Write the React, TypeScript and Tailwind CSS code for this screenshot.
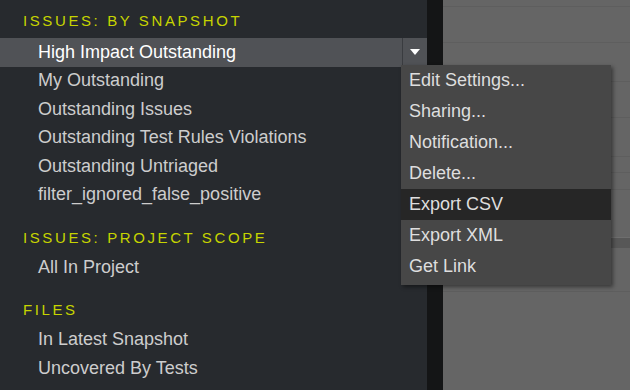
const snapshotItems = [
  "High Impact Outstanding",
  "My Outstanding",
  "Outstanding Issues",
  "Outstanding Test Rules Violations",
  "Outstanding Untriaged",
  "filter_ignored_false_positive",
];

const menuItems = [
  "Edit Settings...",
  "Sharing...",
  "Notification...",
  "Delete...",
  "Export CSV",
  "Export XML",
  "Get Link",
];

const SectionHeader = ({ label, className = "" }: { label: string; className?: string }) => (
  <div
    className={`h-[30px] flex items-center pl-[23px] text-[15px] tracking-[2.6px] text-[#c6d400] ${className}`}
  >
    {label}
  </div>
);

const Row = ({ label, selected = false }: { label: string; selected?: boolean }) => (
  <div
    className={`relative h-[28.5px] flex items-center pl-[38px] text-[18px] ${
      selected ? "bg-[#505256] text-white" : "text-[#cdcdcd]"
    }`}
  >
    {label}
    {selected && (
      <div className="absolute right-0 top-0 h-full w-[25px] border-l border-[#3a3c40] flex items-center justify-center">
        <svg width="10" height="6" viewBox="0 0 10 6">
          <path d="M0 0 L10 0 L5 6 Z" fill="#ffffff" />
        </svg>
      </div>
    )}
  </div>
);

export default function App() {
  return (
    <div
      className="relative w-[630px] h-[390px] flex overflow-hidden"
      style={{ fontFamily: '"Liberation Sans", Arial, sans-serif' }}
    >
      <div className="w-[427px] h-full bg-[#272a2e] pt-[6px]">
        <SectionHeader label="ISSUES: BY SNAPSHOT" className="mb-[2px]" />
        {snapshotItems.map((item, i) => (
          <Row key={item} label={item} selected={i === 0} />
        ))}

        <SectionHeader label="ISSUES: PROJECT SCOPE" className="mt-[14px]" />
        <Row label="All In Project" />

        <SectionHeader label="FILES" className="mt-[14px]" />
        <Row label="In Latest Snapshot" />
        <Row label="Uncovered By Tests" />
      </div>

      <div className="w-[16px] h-full bg-[#141516]" />

      <div className="flex-1 h-full bg-[#656565] flex flex-col">
        <div className="h-[7px] border-b border-[#5e5e5e]" />
        <div className="h-[36px] border-b border-[#5e5e5e]" />
        <div className="h-[39px] border-b border-[#5e5e5e]" />
        <div className="h-[36px] border-b border-[#5e5e5e]" />
        <div className="h-[39px] border-b border-[#5e5e5e]" />
        <div className="h-[16px] border-b border-[#5e5e5e]" />
        <div className="h-[17px] border-b border-[#5e5e5e]" />
        <div className="h-[47px]" />
        <div className="h-[11px] bg-[#575757] border-t border-[#6e6e6e]" />
        <div className="h-[44px] border-b border-[#5e5e5e]" />
      </div>

      <div className="absolute left-[401px] top-[65px] w-[210px] bg-[#474747] pb-[3px] shadow-[2px_2px_4px_rgba(0,0,0,0.45)]">
        {menuItems.map((item) => (
          <div
            key={item}
            className={`h-[31px] flex items-center pl-[8px] text-[18px] text-[#dedede] ${
              item === "Export CSV" ? "bg-[#262626]" : ""
            }`}
          >
            {item}
          </div>
        ))}
      </div>
    </div>
  );
}
